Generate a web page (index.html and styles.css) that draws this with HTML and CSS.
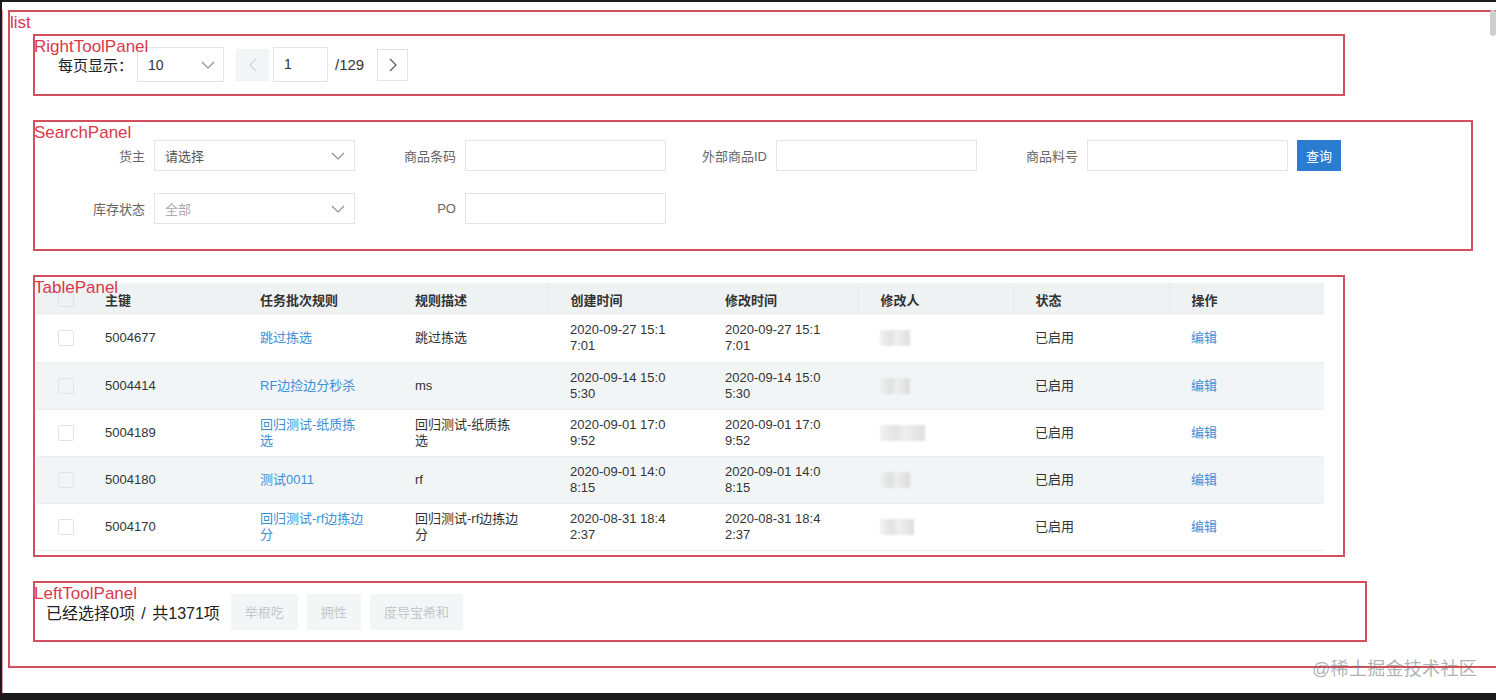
FILE: index.html
```html
<!DOCTYPE html>
<html lang="zh-CN">
<head>
<meta charset="utf-8">
<title>list</title>
<link rel="stylesheet" href="styles.css">
</head>
<body>
<div class="screen">
  <div class="outer">
    <div class="list">
      <span class="tag tag-list">list</span>

      <section class="panel panel-right">
        <span class="tag">RightToolPanel</span>
        <div class="pager">
          <span class="pager-label">每页显示：</span>
          <div class="select select-size">
            <span class="select-value">10</span>
            <svg class="chev" width="14" height="8" viewBox="0 0 14 8"><polyline points="1,1 7,7 13,1" fill="none" stroke="#8a8f94" stroke-width="1.2"/></svg>
          </div>
          <button class="page-btn page-btn-disabled" type="button">
            <svg width="8" height="14" viewBox="0 0 8 14"><polyline points="7,1 1,7 7,13" fill="none" stroke="#cfd4d7" stroke-width="1.2"/></svg>
          </button>
          <div class="page-input">1</div>
          <span class="page-total">/129</span>
          <button class="page-btn page-btn-next" type="button">
            <svg width="8" height="14" viewBox="0 0 8 14"><polyline points="1,1 7,7 1,13" fill="none" stroke="#555a5e" stroke-width="1.2"/></svg>
          </button>
        </div>
      </section>

      <section class="panel panel-search">
        <span class="tag">SearchPanel</span>
        <div class="search-grid">
          <div class="field">
            <label class="field-label">货主</label>
            <div class="select select-field">
              <span class="select-value placeholder">请选择</span>
              <svg class="chev" width="14" height="8" viewBox="0 0 14 8"><polyline points="1,1 7,7 13,1" fill="none" stroke="#8a8f94" stroke-width="1.2"/></svg>
            </div>
          </div>
          <div class="field">
            <label class="field-label">商品条码</label>
            <div class="text-input"></div>
          </div>
          <div class="field">
            <label class="field-label">外部商品ID</label>
            <div class="text-input"></div>
          </div>
          <div class="field">
            <label class="field-label">商品料号</label>
            <div class="text-input"></div>
            <button class="btn-primary" type="button">查询</button>
          </div>
          <div class="field">
            <label class="field-label">库存状态</label>
            <div class="select select-field">
              <span class="select-value muted">全部</span>
              <svg class="chev" width="14" height="8" viewBox="0 0 14 8"><polyline points="1,1 7,7 13,1" fill="none" stroke="#8a8f94" stroke-width="1.2"/></svg>
            </div>
          </div>
          <div class="field">
            <label class="field-label">PO</label>
            <div class="text-input"></div>
          </div>
        </div>
      </section>

      <section class="panel panel-table">
        <span class="tag">TablePanel</span>
        <table class="grid">
          <colgroup>
            <col class="c-check"><col class="c-std"><col class="c-std"><col class="c-std"><col class="c-std"><col class="c-std"><col class="c-std"><col class="c-last">
          </colgroup>
          <thead>
            <tr>
              <th><span class="checkbox"></span></th>
              <th>主键</th>
              <th>任务批次规则</th>
              <th>规则描述</th>
              <th class="sep">创建时间</th>
              <th>修改时间</th>
              <th class="sep">修改人</th>
              <th class="sep">状态</th>
              <th class="sep">操作</th>
            </tr>
          </thead>
          <tbody>
            <tr>
              <td><span class="checkbox"></span></td>
              <td><div class="cell">5004677</div></td>
              <td><div class="cell"><a class="link">跳过拣选</a></div></td>
              <td><div class="cell">跳过拣选</div></td>
              <td><div class="cell cell-time">2020-09-27 15:17:01</div></td>
              <td><div class="cell cell-time">2020-09-27 15:17:01</div></td>
              <td><span class="blur b-30"></span></td>
              <td><div class="cell">已启用</div></td>
              <td><div class="cell"><a class="link">编辑</a></div></td>
            </tr>
            <tr>
              <td><span class="checkbox"></span></td>
              <td><div class="cell">5004414</div></td>
              <td><div class="cell"><a class="link">RF边捡边分秒杀</a></div></td>
              <td><div class="cell">ms</div></td>
              <td><div class="cell cell-time">2020-09-14 15:05:30</div></td>
              <td><div class="cell cell-time">2020-09-14 15:05:30</div></td>
              <td><span class="blur b-30"></span></td>
              <td><div class="cell">已启用</div></td>
              <td><div class="cell"><a class="link">编辑</a></div></td>
            </tr>
            <tr>
              <td><span class="checkbox"></span></td>
              <td><div class="cell">5004189</div></td>
              <td><div class="cell"><a class="link">回归测试-纸质拣选</a></div></td>
              <td><div class="cell">回归测试-纸质拣选</div></td>
              <td><div class="cell cell-time">2020-09-01 17:09:52</div></td>
              <td><div class="cell cell-time">2020-09-01 17:09:52</div></td>
              <td><span class="blur b-45"></span></td>
              <td><div class="cell">已启用</div></td>
              <td><div class="cell"><a class="link">编辑</a></div></td>
            </tr>
            <tr>
              <td><span class="checkbox"></span></td>
              <td><div class="cell">5004180</div></td>
              <td><div class="cell"><a class="link">测试0011</a></div></td>
              <td><div class="cell">rf</div></td>
              <td><div class="cell cell-time">2020-09-01 14:08:15</div></td>
              <td><div class="cell cell-time">2020-09-01 14:08:15</div></td>
              <td><span class="blur b-30"></span></td>
              <td><div class="cell">已启用</div></td>
              <td><div class="cell"><a class="link">编辑</a></div></td>
            </tr>
            <tr>
              <td><span class="checkbox"></span></td>
              <td><div class="cell">5004170</div></td>
              <td><div class="cell"><a class="link">回归测试-rf边拣边分</a></div></td>
              <td><div class="cell">回归测试-rf边拣边分</div></td>
              <td><div class="cell cell-time">2020-08-31 18:42:37</div></td>
              <td><div class="cell cell-time">2020-08-31 18:42:37</div></td>
              <td><span class="blur b-34"></span></td>
              <td><div class="cell">已启用</div></td>
              <td><div class="cell"><a class="link">编辑</a></div></td>
            </tr>
          </tbody>
        </table>
      </section>

      <section class="panel panel-left">
        <span class="tag">LeftToolPanel</span>
        <div class="toolbar">
          <span class="selection">已经选择0项 / 共1371项</span>
          <button class="btn-ghost" type="button">举根吃</button>
          <button class="btn-ghost" type="button">拥性</button>
          <button class="btn-ghost" type="button">度导宝希和</button>
        </div>
      </section>
    </div>
  </div>
  <div class="watermark">@稀土掘金技术社区</div>
  <div class="scroll-thumb"></div>
</div>
</body>
</html>
```

FILE: styles.css
```css
* { box-sizing: border-box; }

html, body {
  margin: 0;
  padding: 0;
  height: 700px;
  overflow: hidden;
  background: #1b1b1b;
  font-family: "Liberation Sans", "Noto Sans CJK SC", sans-serif;
  color: #333;
}

.screen {
  position: relative;
  margin: 2px 0 0 2px;
  height: 691px;
  background: #fff;
  overflow: hidden;
}

.outer {
  height: 686px;
  border-left: 1px solid #e1a0a8;
  border-bottom: 2px solid #d4505e;
}

.list {
  position: relative;
  margin: 8px 0 0 5px;
  width: 1500px;
  height: 658px;
  border: 2px solid #d4505e;
  padding: 22px 0 0 23px;
  display: flex;
  flex-direction: column;
  gap: 24px;
}

.tag {
  position: absolute;
  left: -1px;
  top: 1px;
  font-size: 17px;
  line-height: 20px;
  color: #d8394b;
  z-index: 2;
  pointer-events: none;
}

.tag-list { left: 0; top: 1px; }

.panel {
  position: relative;
  border: 2px solid #d4505e;
  flex: none;
}

/* ---------- RightToolPanel ---------- */
.panel-right {
  width: 1312px;
  padding: 11px 0 12px 23px;
}

.pager {
  display: flex;
  align-items: center;
  height: 35px;
}

.pager-label {
  font-size: 15px;
  color: #222;
  margin-right: 4px;
}

.select {
  display: flex;
  align-items: center;
  justify-content: space-between;
  border: 1px solid #e2e5e8;
  background: #fff;
  flex: none;
}

.select-size {
  width: 87px;
  height: 35px;
  padding: 0 8px 0 10px;
  font-size: 14px;
  color: #333;
}

.chev { display: block; }

.page-btn {
  width: 33px;
  height: 32px;
  margin-left: 12px;
  border: 1px solid #e2e5e8;
  background: #fff;
  padding: 0;
  display: flex;
  align-items: center;
  justify-content: center;
}

.page-btn-next {
  width: 31px;
  margin-left: 13px;
}

.page-btn-disabled {
  background: #f3f6f7;
  border-color: #f0f3f4;
}

.page-input {
  width: 55px;
  height: 35px;
  margin-left: 4px;
  border: 1px solid #e2e5e8;
  padding-left: 10px;
  font-size: 14px;
  line-height: 33px;
  color: #333;
}

.page-total {
  margin-left: 7px;
  font-size: 15px;
  color: #333;
}

/* ---------- SearchPanel ---------- */
.panel-search {
  width: 1440px;
  padding: 18px 0 25px 9px;
}

.search-grid {
  display: grid;
  grid-template-columns: repeat(4, 311px);
  row-gap: 22px;
}

.field {
  display: flex;
  align-items: center;
  height: 31px;
}

.field-label {
  width: 110px;
  flex: none;
  padding-right: 9px;
  text-align: right;
  font-size: 13px;
  color: #666;
}

.select-field {
  width: 201px;
  height: 31px;
  padding: 0 9px 0 10px;
  font-size: 13px;
}

.placeholder { color: #555; }
.muted { color: #aaa; }

.text-input {
  width: 201px;
  height: 31px;
  flex: none;
  border: 1px solid #e2e5e8;
  background: #fff;
}

.btn-primary {
  margin-left: 9px;
  width: 44px;
  height: 31px;
  border: none;
  background: #2b7bd0;
  color: #fff;
  font-family: inherit;
  font-size: 13px;
  padding: 0;
  flex: none;
}

/* ---------- TablePanel ---------- */
.panel-table {
  width: 1312px;
  padding: 6px 0 4px 1px;
}

.grid {
  width: 1288px;
  table-layout: fixed;
  border-collapse: collapse;
  font-size: 13px;
}

.c-check { width: 47px; }
.c-std { width: 155px; }
.c-last { width: 156px; }

.grid th {
  height: 32px;
  background: #eef2f3;
  text-align: left;
  font-weight: 600;
  color: #333;
  padding: 0 0 0 22px;
  vertical-align: middle;
}

.grid th.sep { border-left: 1px solid #e3e8ea; }

.grid td {
  height: 47px;
  padding: 0 0 0 22px;
  vertical-align: middle;
  border-bottom: 1px solid #e9edef;
  color: #333;
}

.grid tbody tr:nth-child(even) td { background: #f2f5f6; }

.cell {
  width: 105px;
  word-break: break-all;
  line-height: 16px;
}

.cell-time { width: 98px; }

.link {
  color: #3d8fd6;
  text-decoration: none;
}

.checkbox {
  display: block;
  width: 16px;
  height: 16px;
  border: 1px solid #e0e4e7;
  border-radius: 2px;
  background: transparent;
}

.grid tbody tr:nth-child(odd) .checkbox { background: #fff; }

.blur {
  display: block;
  height: 16px;
  background: linear-gradient(90deg, #f0f0f0 0%, #dcdcdc 35%, #ececec 55%, #d6d6d6 100%);
  filter: blur(1px);
  opacity: 0.8;
}

.b-30 { width: 30px; }
.b-34 { width: 34px; }
.b-45 { width: 45px; }

/* ---------- LeftToolPanel ---------- */
.panel-left {
  width: 1334px;
  padding: 11px 0 10px 11px;
}

.toolbar {
  display: flex;
  align-items: center;
  height: 36px;
  gap: 9px;
}

.selection {
  font-size: 16px;
  color: #222;
  margin-right: 2px;
  word-spacing: 2px;
}

.btn-ghost {
  height: 36px;
  padding: 0 14px;
  border: none;
  background: #f3f6f7;
  color: #c3c8cb;
  font-family: inherit;
  font-size: 13px;
}

/* ---------- overlays ---------- */
.watermark {
  position: absolute;
  right: 19px;
  top: 652px;
  font-size: 18px;
  color: rgba(110, 110, 110, 0.55);
  letter-spacing: 0.3px;
}

.scroll-thumb {
  position: absolute;
  right: 0;
  top: 8px;
  width: 6px;
  height: 26px;
  background: #cfcfcf;
  border-radius: 3px;
}
```
